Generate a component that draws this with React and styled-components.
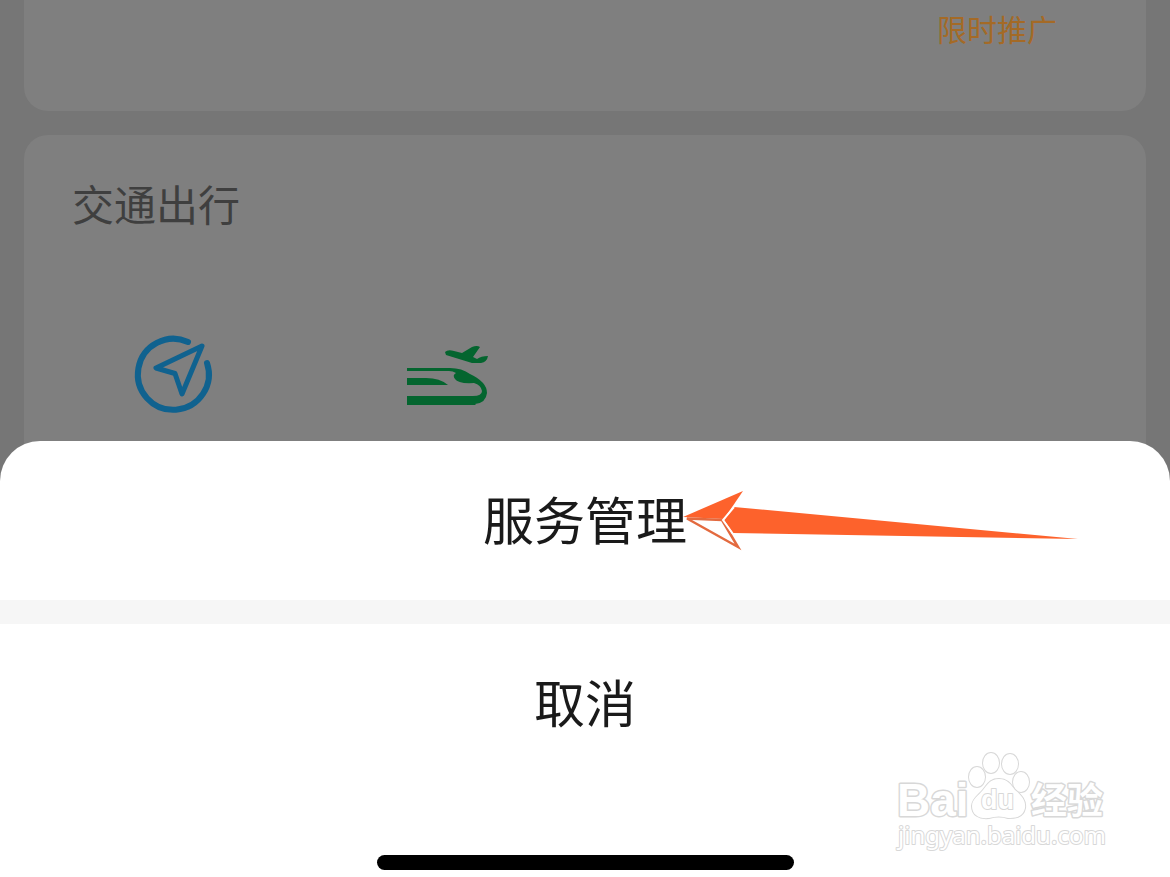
import React from "react";
import styled, { createGlobalStyle } from "styled-components";

const GlobalStyle = createGlobalStyle`
  *, *::before, *::after { box-sizing: border-box; }
  html, body, #root { height: 100%; }
  body {
    margin: 0;
    overflow: hidden;
    background: #767676;
    font-family: "Noto Sans CJK SC", "Noto Sans", sans-serif;
  }
`;

const Screen = styled.div`
  position: relative;
  height: 100%;
  overflow: hidden;
`;

const Feed = styled.main`
  display: flex;
  flex-direction: column;
  gap: 24px;
  padding: 0 24px;
`;

const Card = styled.section`
  display: flex;
  flex-direction: column;
  padding: ${(p) => (p.$top ? "6px 89px 60px" : "36px 48px 120px")};
  border-radius: ${(p) => (p.$top ? "0 0 24px 24px" : "24px")};
  background: #7f7f7f;
`;

const Promo = styled.span`
  align-self: flex-end;
  font-size: 30px;
  line-height: 45px;
  color: #a46a26;
`;

const CardTitle = styled.h2`
  margin: 0;
  font-size: 42px;
  line-height: 64px;
  font-weight: 400;
  color: #3f3f3f;
`;

const Services = styled.nav`
  display: flex;
  gap: 183px;
  margin-top: 94px;
  margin-left: 55px;
`;

const Service = styled.a`
  display: block;
  height: 92px;
`;

const ServiceIcon = styled.svg`
  display: block;
  width: 92px;
  height: 92px;
`;

const Sheet = styled.div`
  position: absolute;
  left: 0;
  right: 0;
  bottom: 0;
  display: flex;
  flex-direction: column;
  background: #fff;
  border-radius: 40px 40px 0 0;
`;

const SheetButton = styled.button`
  height: 159px;
  padding: 0 0 6px;
  border: 0;
  background: transparent;
  font-family: inherit;
  font-size: 51px;
  line-height: 76px;
  color: #1a1a1a;
  cursor: pointer;
`;

const Divider = styled.div`
  height: 24px;
  background: #f6f6f6;
`;

const HomeArea = styled.div`
  display: flex;
  justify-content: center;
  align-items: flex-end;
  height: 94px;
  padding-bottom: 7px;
`;

const HomeBar = styled.div`
  width: 417px;
  height: 15px;
  border-radius: 8px;
  background: #000;
`;

const Arrow = styled.svg`
  position: absolute;
  left: calc(50% + 97px);
  top: 46px;
  width: 400px;
  height: 68px;
  pointer-events: none;
`;

const Watermark = styled.svg`
  position: absolute;
  right: 56px;
  bottom: 21px;
  width: 220px;
  height: 108px;
  pointer-events: none;
`;

const outline = {
  fill: "#fff",
  stroke: "#d8d8d8",
  strokeWidth: 3,
  paintOrder: "stroke",
  strokeLinejoin: "round",
};

function NavigateIcon() {
  return (
    <ServiceIcon viewBox="0 0 92 92" aria-hidden="true">
      <g fill="none" stroke="#10628f" strokeWidth="6" strokeLinejoin="round">
        <path d="M61 13A35.500 35.500 0 1 0 80 34" strokeLinecap="round" />
        <path d="M75 17L29 39L48 44.500L55 65Z" strokeWidth="5" />
      </g>
    </ServiceIcon>
  );
}

function TravelIcon() {
  return (
    <ServiceIcon viewBox="0 0 92 92" aria-hidden="true">
      <g fill="#04652f">
        <path d="M43 23Q46 20 52 22L60 24L70 18Q75 16 78 18L71 28L75 30Q79 27 86 27Q85 33 79 34L70 34L44 26Z" />
        <path d="M5 39H48Q60 39 68 45Q85 53 85 64Q84 74 73 75L74 76H5V67H71Q80 67 80 62Q79 56 72 54Q56 55 53 50Q50 46 54 44Q51 42 47 42H5Z" />
        <path d="M5 49H24Q38 49 46 56H5Z" />
      </g>
    </ServiceIcon>
  );
}

function PointerArrow() {
  return (
    <Arrow viewBox="0 0 400 68" aria-hidden="true">
      <g fill="#fd622c">
        <path d="M1 30L61 4L42 32Z" />
        <path d="M52 20L396 52L51 46L42 33Z" />
      </g>
      <path d="M5 31.500L40 33L56 60Z" fill="#fff" stroke="#e36a3f" strokeWidth="2.500" />
      <path d="M52 20L41 33L51 47" fill="none" stroke="#fff" strokeWidth="2" />
    </Arrow>
  );
}

function BaiduWatermark() {
  return (
    <Watermark viewBox="0 0 220 108" role="img" aria-label="Baidu 经验">
      <g {...outline}>
        <text x="3" y="68" fontFamily="Liberation Sans, sans-serif" fontWeight="700" fontSize="46">Bai</text>
        <g strokeWidth="2">
          <ellipse cx="83" cy="29" rx="8" ry="10" />
          <ellipse cx="97" cy="15" rx="8" ry="10" />
          <ellipse cx="116" cy="16" rx="8" ry="10" />
          <ellipse cx="127" cy="34" rx="8" ry="10" />
          <path d="M105 31C114 31 117 37 121 42C128 48 132 53 131 60C129 70 120 70 114 70Q105 67 95 70C85 71 78 67 78 58C78 51 85 47 89 42C94 36 96 31 105 31Z" />
          <text x="87" y="61" fontFamily="Liberation Sans, sans-serif" fontWeight="700" fontSize="27">du</text>
          <text x="4" y="96" fontFamily="Noto Sans, sans-serif" fontSize="24">jingyan.baidu.com</text>
        </g>
        <text x="137" y="66" fontFamily="Noto Sans CJK SC, sans-serif" fontWeight="700" fontSize="36">经验</text>
      </g>
    </Watermark>
  );
}

export default function App() {
  return (
    <>
      <GlobalStyle />
      <Screen>
        <Feed>
          <Card $top>
            <Promo>限时推广</Promo>
          </Card>
          <Card>
            <CardTitle>交通出行</CardTitle>
            <Services>
              <Service href="#navigate" aria-label="导航"><NavigateIcon /></Service>
              <Service href="#travel" aria-label="火车票机票"><TravelIcon /></Service>
            </Services>
          </Card>
        </Feed>
        <Sheet role="dialog" aria-label="服务管理">
          <SheetButton type="button">服务管理</SheetButton>
          <Divider />
          <SheetButton type="button">取消</SheetButton>
          <HomeArea><HomeBar /></HomeArea>
          <PointerArrow />
          <BaiduWatermark />
        </Sheet>
      </Screen>
    </>
  );
}
